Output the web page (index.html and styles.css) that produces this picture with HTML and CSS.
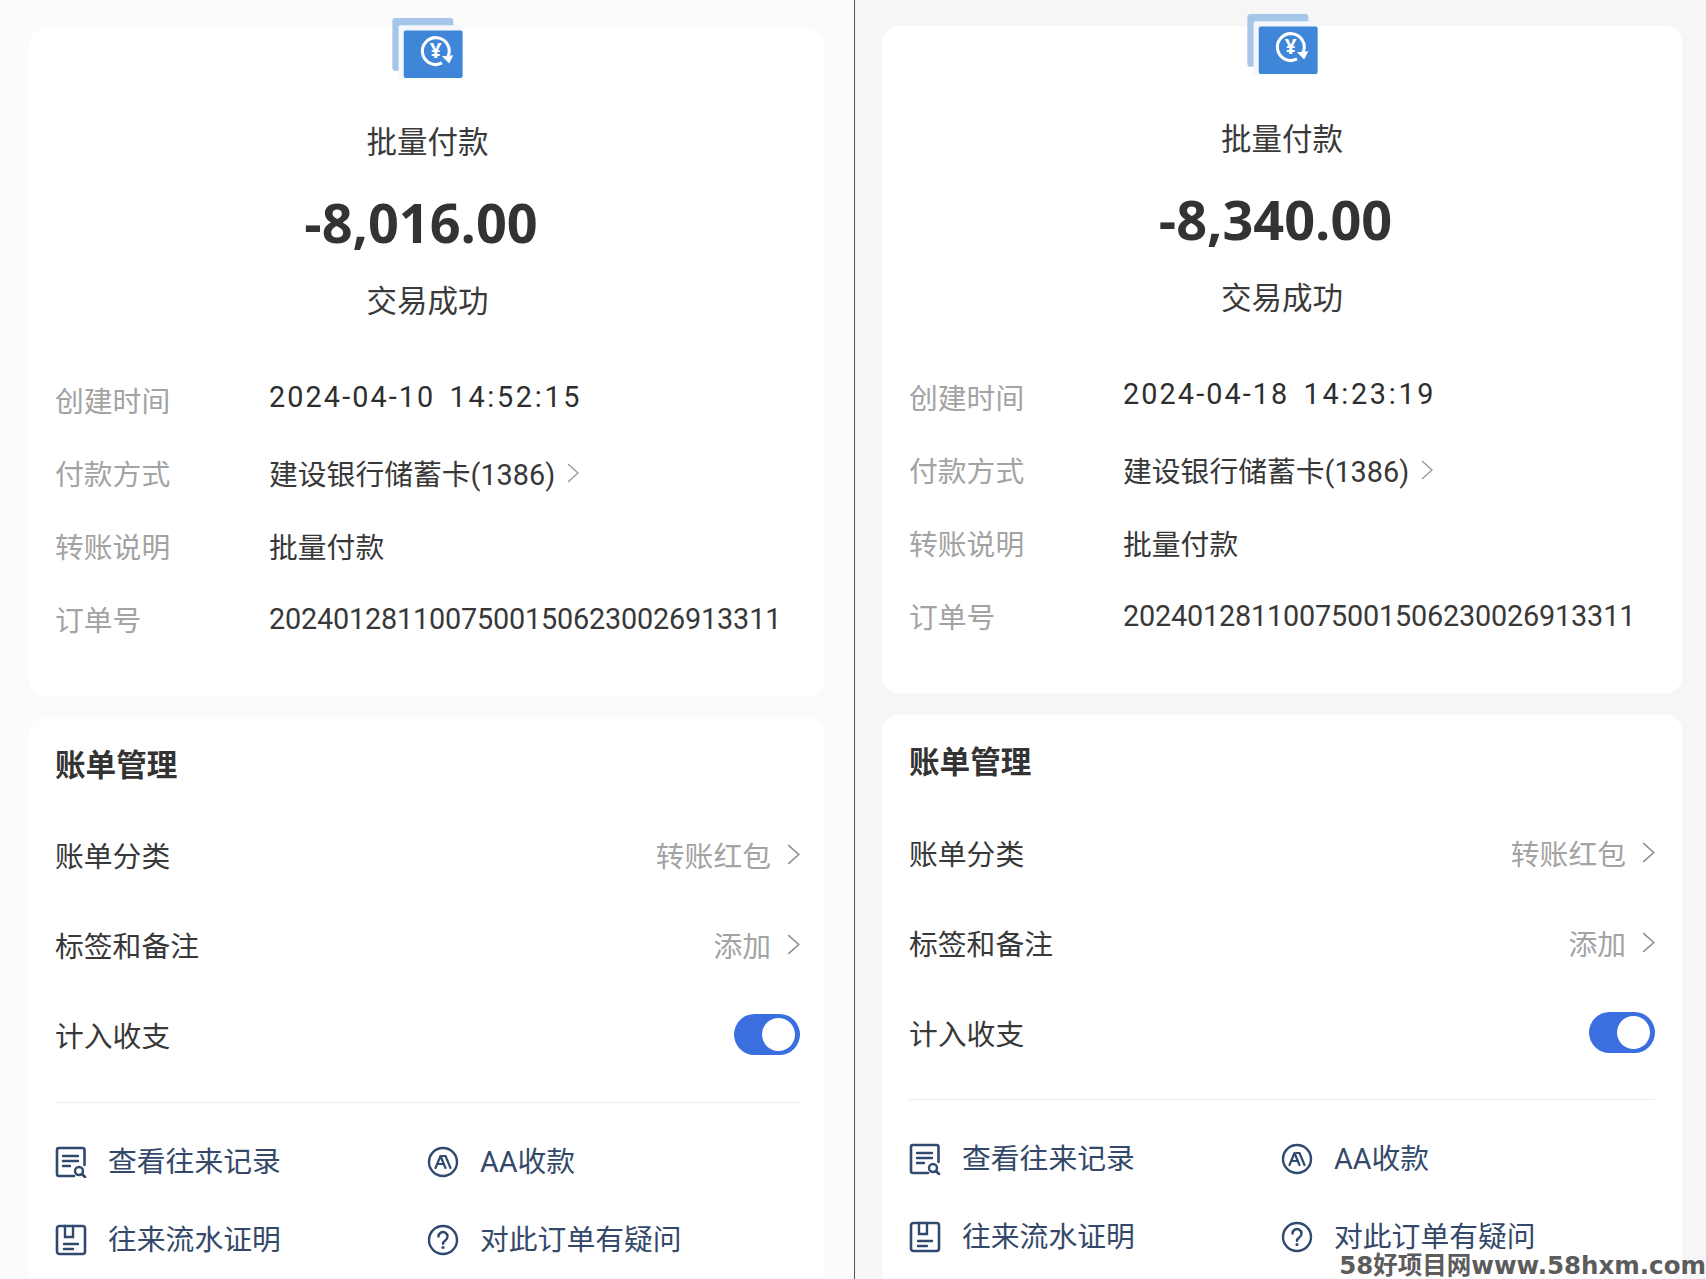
FILE: index.html
```html
<!DOCTYPE html>
<html lang="zh-CN">
<head>
<meta charset="utf-8">
<title>批量付款</title>
<link rel="stylesheet" href="styles.css">
</head>
<body>
<svg class="defs" width="0" height="0" aria-hidden="true">
  <defs>
    <symbol id="pay" viewBox="0 0 68 60">
      <rect x="0" y="1" width="59" height="51" rx="3" fill="#a6c6e9"/>
      <rect x="6" y="8" width="62" height="52" rx="2" fill="#f4f8fd"/>
      <rect x="11" y="13" width="57" height="46" rx="2" fill="#3f85d8"/>
      <path d="M54 38A13 13 0 1 0 48 44.500" fill="none" stroke="#fff" stroke-width="3"/>
      <path d="M48 38l11-1-4 8z" fill="#fff"/>
      <text x="42" y="40" class="yen">¥</text>
    </symbol>
    <symbol id="record" viewBox="0 0 32 32">
      <path d="M29.500 19V4a2 2 0 0 0-2-2H4a2 2 0 0 0-2 2v24a2 2 0 0 0 2 2h15" fill="none" stroke="#2f4a6e" stroke-width="2.600" stroke-linecap="round"/>
      <path d="M8 10h15M8 15h15M8 20h7" fill="none" stroke="#2f4a6e" stroke-width="2.400" stroke-linecap="round"/>
      <circle cx="24" cy="25" r="4" fill="#fff" stroke="#2f4a6e" stroke-width="2.400"/>
      <path d="M27 28l3 3" stroke="#2f4a6e" stroke-width="2.600" stroke-linecap="round"/>
    </symbol>
    <symbol id="proof" viewBox="0 0 32 32">
      <rect x="2" y="2" width="28" height="28" rx="2.500" fill="none" stroke="#2f4a6e" stroke-width="2.600"/>
      <path d="M10 2v11h8V2M9 20h14M9 25h9" fill="none" stroke="#2f4a6e" stroke-width="2.400" stroke-linecap="round"/>
    </symbol>
    <symbol id="aa" viewBox="0 0 32 32">
      <circle cx="16" cy="16" r="14" fill="none" stroke="#2f4a6e" stroke-width="2.400"/>
      <path d="M8.500 22L13.500 10L18.500 22M11 18h5M15.500 10h3L23.500 22" fill="none" stroke="#2f4a6e" stroke-width="2.200" stroke-linecap="round" stroke-linejoin="round"/>
    </symbol>
    <symbol id="help" viewBox="0 0 32 32">
      <circle cx="16" cy="16" r="14" fill="none" stroke="#2f4a6e" stroke-width="2.400"/>
      <path d="M11.500 12.500a4.500 4.500 0 1 1 6.800 3.900c-1.500 1-2.300 1.700-2.300 3.300" fill="none" stroke="#2f4a6e" stroke-width="2.400" stroke-linecap="round"/>
      <circle cx="16" cy="23.500" r="1.600" fill="#2f4a6e"/>
    </symbol>
    <symbol id="chev" viewBox="0 0 12 20">
      <path d="M1 1l10 9-10 9" fill="none" stroke="currentColor" stroke-width="1.500"/>
    </symbol>
  </defs>
</svg>

<main class="screens">
  <section class="panel panel-left">
    <div class="card card-detail">
      <svg class="pay-icon"><use href="#pay"/></svg>
      <div class="title">批量付款</div>
      <div class="amount">-8,016.00</div>
      <div class="status">交易成功</div>
      <dl class="facts">
        <div class="fact"><dt>创建时间</dt><dd class="time">2024-04-10&nbsp; <span class="clock">14:52:15</span></dd></div>
        <div class="fact"><dt>付款方式</dt><dd>建设银行储蓄卡(1386)<svg class="chev-small"><use href="#chev"/></svg></dd></div>
        <div class="fact"><dt>转账说明</dt><dd>批量付款</dd></div>
        <div class="fact"><dt>订单号</dt><dd class="order">20240128110075001506230026913311</dd></div>
      </dl>
    </div>
    <div class="card card-manage">
      <h2 class="manage-title">账单管理</h2>
      <div class="setting"><span>账单分类</span><span class="setting-value">转账红包<svg class="chev"><use href="#chev"/></svg></span></div>
      <div class="setting"><span>标签和备注</span><span class="setting-value">添加<svg class="chev"><use href="#chev"/></svg></span></div>
      <div class="setting"><span>计入收支</span><span class="toggle"></span></div>
      <hr class="rule">
      <div class="actions">
        <div class="action"><svg class="action-icon"><use href="#record"/></svg>查看往来记录</div>
        <div class="action"><svg class="action-icon"><use href="#aa"/></svg>AA收款</div>
        <div class="action"><svg class="action-icon"><use href="#proof"/></svg>往来流水证明</div>
        <div class="action"><svg class="action-icon"><use href="#help"/></svg>对此订单有疑问</div>
      </div>
    </div>
  </section>

  <section class="panel panel-right">
    <div class="card card-detail">
      <svg class="pay-icon"><use href="#pay"/></svg>
      <div class="title">批量付款</div>
      <div class="amount">-8,340.00</div>
      <div class="status">交易成功</div>
      <dl class="facts">
        <div class="fact"><dt>创建时间</dt><dd class="time">2024-04-18&nbsp; <span class="clock">14:23:19</span></dd></div>
        <div class="fact"><dt>付款方式</dt><dd>建设银行储蓄卡(1386)<svg class="chev-small"><use href="#chev"/></svg></dd></div>
        <div class="fact"><dt>转账说明</dt><dd>批量付款</dd></div>
        <div class="fact"><dt>订单号</dt><dd class="order">20240128110075001506230026913311</dd></div>
      </dl>
    </div>
    <div class="card card-manage">
      <h2 class="manage-title">账单管理</h2>
      <div class="setting"><span>账单分类</span><span class="setting-value">转账红包<svg class="chev"><use href="#chev"/></svg></span></div>
      <div class="setting"><span>标签和备注</span><span class="setting-value">添加<svg class="chev"><use href="#chev"/></svg></span></div>
      <div class="setting"><span>计入收支</span><span class="toggle"></span></div>
      <hr class="rule">
      <div class="actions">
        <div class="action"><svg class="action-icon"><use href="#record"/></svg>查看往来记录</div>
        <div class="action"><svg class="action-icon"><use href="#aa"/></svg>AA收款</div>
        <div class="action"><svg class="action-icon"><use href="#proof"/></svg>往来流水证明</div>
        <div class="action"><svg class="action-icon"><use href="#help"/></svg>对此订单有疑问</div>
      </div>
    </div>
  </section>
  <div class="watermark">58好项目网www.58hxm.com</div>
</main>
</body>
</html>
```

FILE: styles.css
```css
* { box-sizing: border-box; }

html, body {
  margin: 0;
  height: 100%;
  overflow: hidden;
}

body {
  background: #fcfcfc;
  color: #333;
  font-family: Roboto, "Noto Sans CJK SC", "Noto Sans", sans-serif;
  font-size: 28.8px;
}

.defs { position: absolute; }

.yen {
  fill: #fff;
  font: 700 20px "Noto Sans", sans-serif;
  text-anchor: middle;
}

.screens {
  position: relative;
  display: flex;
  width: 1706px;
  height: 1279px;
  overflow: hidden;
}

.panel { flex: none; height: 1290px; }

.panel-left {
  width: 854px;
  padding: 29px 30px 0 29px;
  background: #fbfbfc;
}

.panel-right {
  width: 852px;
  margin-top: -2px;
  padding: 28px 24px 0 27px;
  border-left: 1px solid #555;
  background: #f6f6f7;
}

.card {
  display: flow-root;
  background: #fff;
  padding-left: 26px;
  padding-right: 24px;
  border-radius: 16px;
}

.panel-right .card { padding-left: 27px; padding-right: 27px; }

.card-detail { height: 667px; }

.pay-icon {
  display: block;
  width: 71px;
  height: 62px;
  margin: -12px auto 0;
}

.panel-right .pay-icon { margin-top: -13px; }

.title, .status {
  height: 40px;
  line-height: 40px;
  font-size: 30.5px;
  text-align: center;
  color: #3a3a3a;
}

.title { margin-top: 44px; }

.panel-right .title { margin-top: 45px; }

.amount {
  height: 70px;
  margin-top: 24px;
  padding-right: 13px;
  line-height: 70px;
  font-family: "Open Sans", "Noto Sans", sans-serif;
  font-size: 54px;
  font-weight: 700;
  text-align: center;
  color: #333;
}

.status { margin-top: 25px; }

.facts { margin: 41px 0 0; }

.fact {
  display: flex;
  align-items: center;
  height: 73px;
}

.fact dt { width: 214px; flex: none; color: #a3a3a3; }

.fact dd {
  display: flex;
  align-items: center;
  margin: 0;
  color: #383838;
  white-space: nowrap;
}

.fact .time { display: block; margin-top: -6px; letter-spacing: 2.1px; color: #2e2e2e; }

.clock { margin-left: -4.400px; letter-spacing: 2.700px; }

.fact .order { letter-spacing: -0.180px; }

.chev-small {
  width: 12px;
  height: 20px;
  margin-left: 12px;
  color: #9a9a9a;
}

.card-manage { margin-top: 22px; padding-top: 28px; height: 600px; }

.manage-title {
  margin: 0 0 23px;
  height: 40px;
  line-height: 40px;
  font-size: 30.6px;
  font-weight: 700;
  color: #333;
}

.panel-right .manage-title { margin-bottom: 24px; }

.setting {
  display: flex;
  align-items: center;
  justify-content: space-between;
  height: 90px;
  color: #383838;
}

.setting-value { display: flex; align-items: center; color: #a3a3a3; }

.chev {
  width: 13px;
  height: 21px;
  margin-left: 16px;
  color: #8f8f8f;
}

.toggle {
  position: relative;
  width: 66px;
  height: 41px;
  border-radius: 21px;
  background: #3b6fdf;
}

.toggle::after {
  content: "";
  position: absolute;
  top: 4px;
  right: 5px;
  width: 33px;
  height: 33px;
  border-radius: 50%;
  background: #fff;
}

.rule {
  margin: 23px 0 0;
  border: 0;
  border-top: 1px solid #ececec;
}

.panel-right .rule { margin-top: 22px; }

.actions {
  display: grid;
  grid-template-columns: 372px 1fr;
  grid-auto-rows: 78px;
  margin-top: 20px;
}

.action {
  display: flex;
  align-items: center;
  gap: 21px;
  line-height: 28px;
  color: #34496a;
}

.action-icon { width: 32px; height: 32px; flex: none; }

.watermark {
  position: absolute;
  right: 0;
  bottom: 0;
  font-family: "DejaVu Sans", "Noto Sans CJK SC", sans-serif;
  font-size: 24.5px;
  font-weight: 700;
  line-height: 26px;
  color: #5c5c5c;
  text-shadow: 0 0 3px #fff, 0 0 3px #fff;
  white-space: nowrap;
}
```
